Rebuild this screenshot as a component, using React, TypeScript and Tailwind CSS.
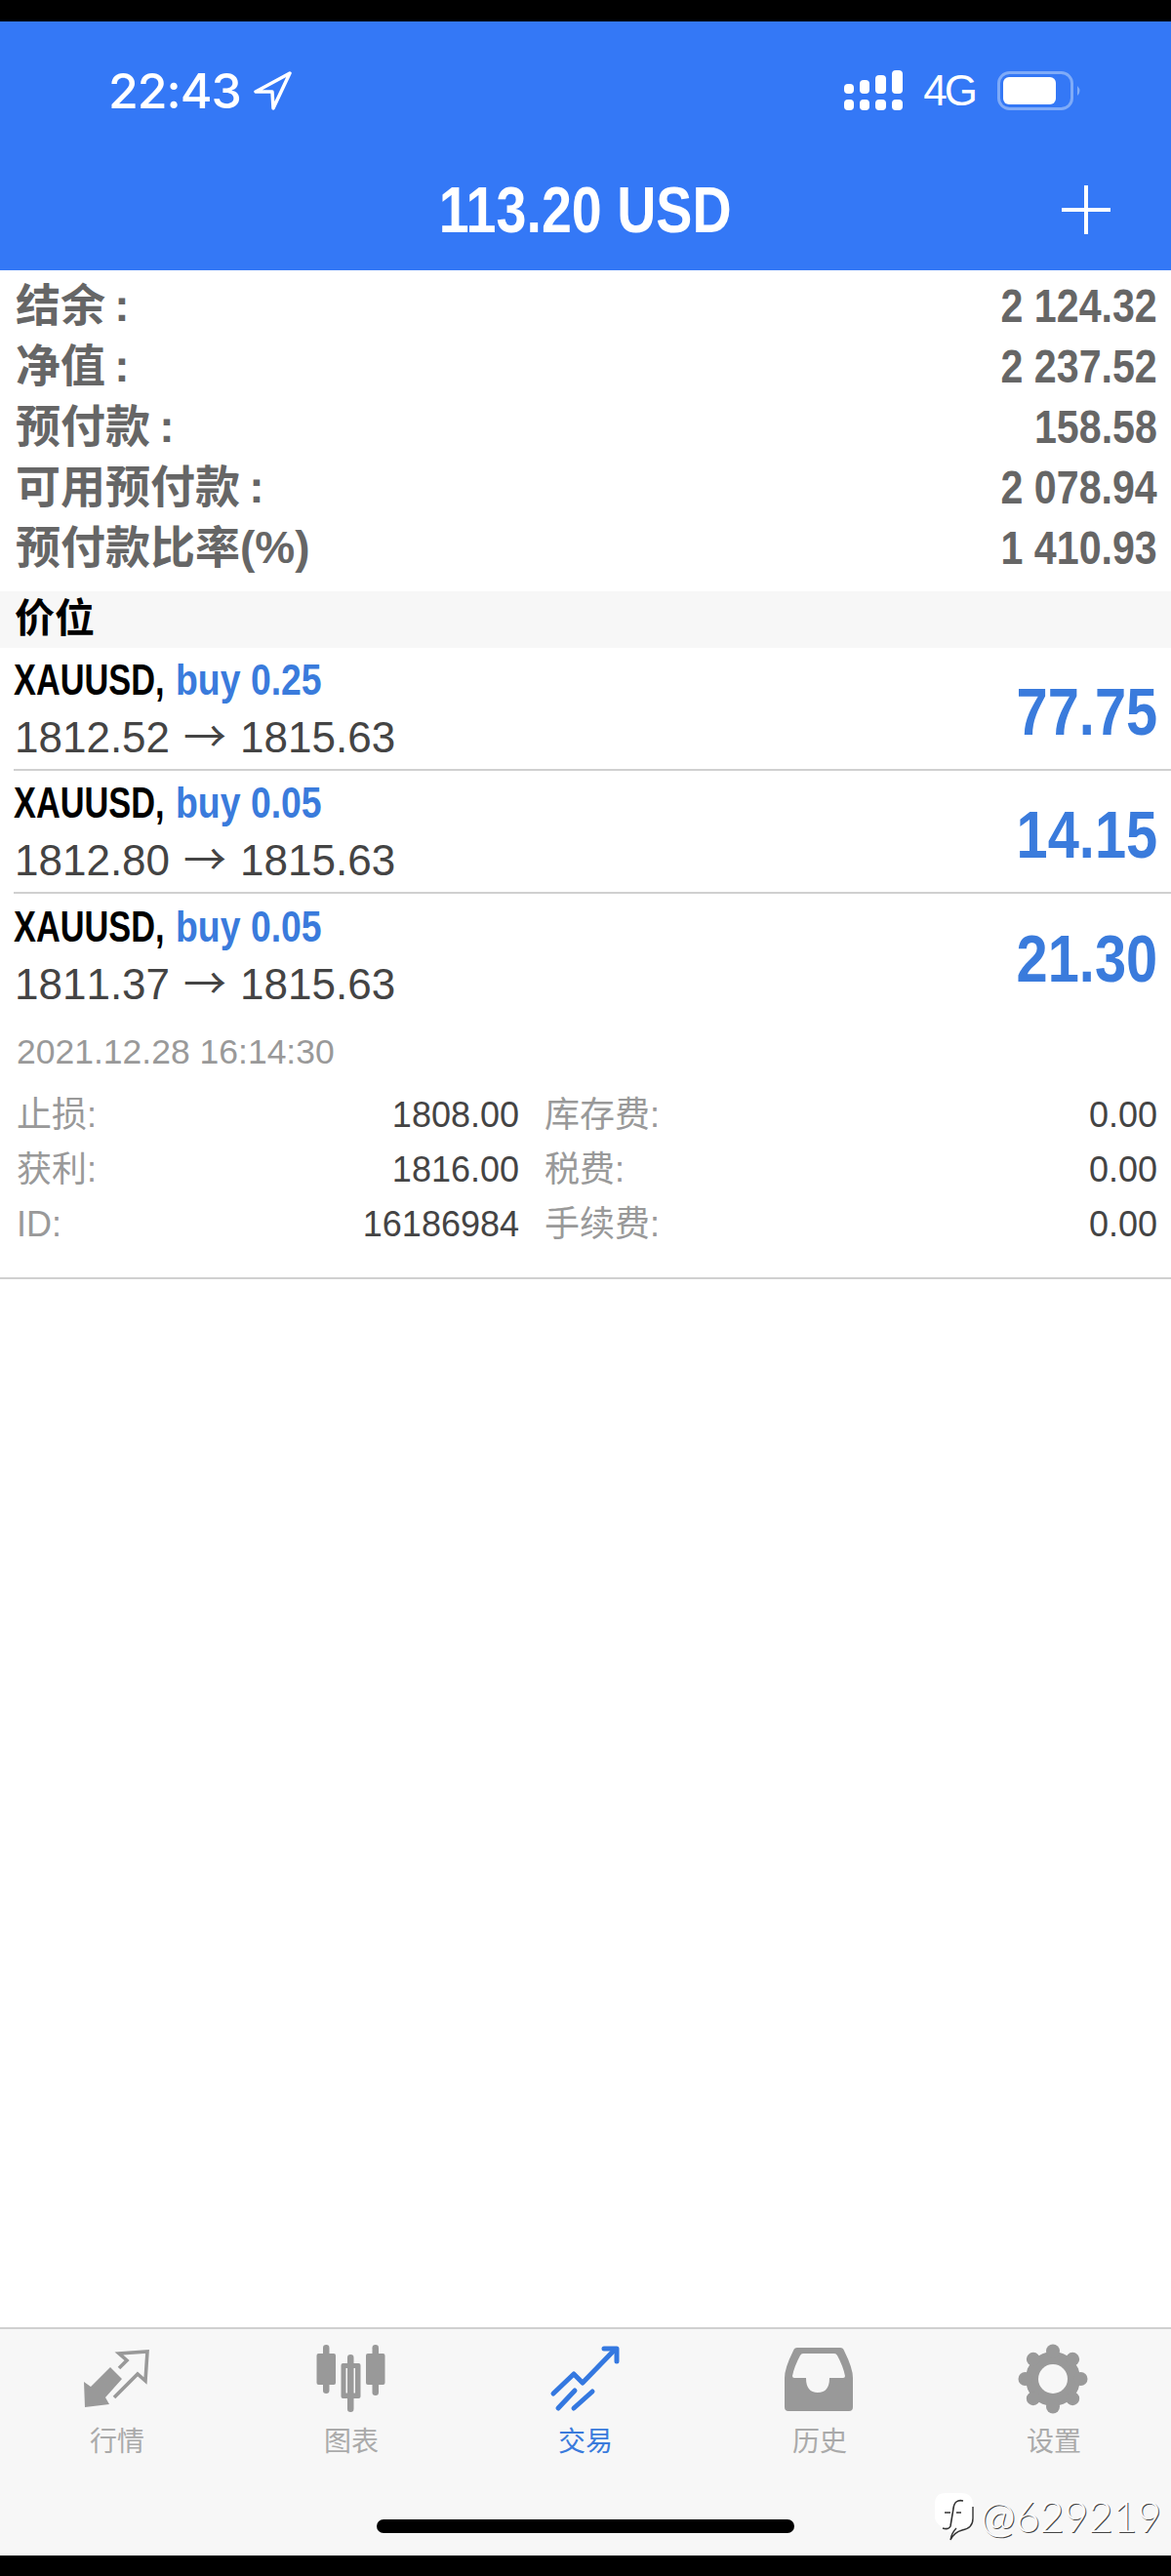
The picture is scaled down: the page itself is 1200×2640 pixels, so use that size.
const summary = [
  ['结余\u2009:', '2 124.32'],
  ['净值\u2009:', '2 237.52'],
  ['预付款\u2009:', '158.58'],
  ['可用预付款\u2009:', '2 078.94'],
  ['预付款比率(%)', '1 410.93'],
];

const positions = [
  { lots: 'buy 0.25', open: '1812.52', profit: '77.75' },
  { lots: 'buy 0.05', open: '1812.80', profit: '14.15' },
  { lots: 'buy 0.05', open: '1811.37', profit: '21.30' },
];

const details = [
  ['止损:', '1808.00', '库存费:', '0.00'],
  ['获利:', '1816.00', '税费:', '0.00'],
  ['ID:', '16186984', '手续费:', '0.00'],
];

const StatusIcons = () => (
  <div className="flex items-center">
    <svg width="60" height="41" viewBox="0 0 60 41" fill="white">
      <rect x="0" y="14" width="10" height="10" rx="4" />
      <rect x="16" y="10" width="10" height="14" rx="4" />
      <rect x="32" y="5" width="11" height="19" rx="4" />
      <rect x="49" y="0" width="11" height="24" rx="4" />
      <rect x="0" y="30" width="10" height="11" rx="4" />
      <rect x="16" y="30" width="10" height="11" rx="4" />
      <rect x="32" y="30" width="11" height="11" rx="4" />
      <rect x="49" y="30" width="11" height="11" rx="4" />
    </svg>
    <span className="ml-[21px] text-[44px] leading-[44px] tracking-[-3px]">4G</span>
    <svg className="ml-[23px]" width="87" height="40" viewBox="0 0 87 40">
      <rect x="1.5" y="1.5" width="75" height="37" rx="11" fill="none" stroke="#7fabf8" strokeWidth="3" />
      <rect x="6" y="6" width="54" height="28" rx="6" fill="white" />
      <path d="M82 15 Q87 20 82 25 Z" fill="#7fabf8" />
    </svg>
  </div>
);

const MarketIcon = () => (
  <svg width="100" height="85" viewBox="0 0 100 85">
    <path d="M43 31 L55 43 L38 62 L42 69 L17 72 L16 46 L23 51 Z" fill="#999" />
    <path d="M52 32 L60 24 L52 17 L81 15 L79 45 L71 38 L47 62" fill="none" stroke="#999" strokeWidth="3.6" />
  </svg>
);

const ChartIcon = () => (
  <svg width="100" height="85" viewBox="0 0 100 85" fill="#999">
    <rect x="21" y="8" width="6.5" height="50" rx="3.2" />
    <rect x="14.5" y="17" width="19.5" height="32" rx="2" />
    <rect x="46" y="18" width="6.5" height="59" rx="3.2" />
    <path fillRule="evenodd" d="M41.5 27 H57.5 Q59.5 27 59.5 29 V61 Q59.5 63 57.5 63 H41.5 Q39.5 63 39.5 61 V29 Q39.5 27 41.5 27 Z M44.5 32 V57.5 H54 V32 Z" />
    <rect x="71.5" y="8" width="6.5" height="52" rx="3.2" />
    <rect x="65" y="17" width="19.5" height="32" rx="2" />
  </svg>
);

const TradeIcon = () => (
  <svg width="100" height="85" viewBox="0 0 100 85" fill="none" stroke="#3478e0" strokeWidth="5" strokeLinecap="round" strokeLinejoin="round">
    <path d="M17 58 L38 38 L47 47 L80 13" />
    <path d="M69 12 H82 V25" />
    <path d="M22 73 L39 55" />
    <path d="M38 73 L57 56" />
  </svg>
);

const HistoryIcon = () => (
  <svg width="100" height="85" viewBox="0 0 100 85" fill="#999">
    <path
      fillRule="evenodd"
      d="M27 11 H71 Q74 11 75 14 Q84 32 84 42 V72 Q84 76 80 76 H18 Q14 76 14 72 V42 Q14 32 23 14 Q24 11 27 11 Z M33 17 H65 Q67 17 68 19 Q74 30 76 40 Q76 42 74 42 H60 Q60 57 48 57 Q36 57 36 42 H24 Q22 42 22 40 Q24 30 30 19 Q31 17 33 17 Z"
    />
  </svg>
);

const SettingsIcon = () => (
  <svg width="100" height="85" viewBox="0 0 100 85" fill="#999">
    <circle cx="49" cy="43" r="28" />
    {[0, 45, 90, 135, 180, 225, 270, 315].map((deg) => (
      <circle key={deg} cx="49" cy="14.5" r="7" transform={`rotate(${deg} 49 43)`} />
    ))}
    <circle cx="49" cy="43" r="15" fill="#f7f7f7" />
  </svg>
);

const tabs = [
  { label: '行情', icon: <MarketIcon /> },
  { label: '图表', icon: <ChartIcon /> },
  { label: '交易', icon: <TradeIcon />, active: true },
  { label: '历史', icon: <HistoryIcon /> },
  { label: '设置', icon: <SettingsIcon /> },
];

export default function App() {
  return (
    <div className='relative flex h-[2640px] w-[1200px] flex-col bg-white font-["Liberation_Sans","Noto_Sans_CJK_SC",sans-serif]'>
      <div className="h-[22px] bg-black" />
      <div className="h-[255px] bg-[#3478f6] text-white">
        <div className="flex h-[141px] items-center justify-between pl-[111px] pr-[91px]">
          <div className="flex items-center gap-[12px]">
            <span className='font-["Inter",sans-serif] text-[50px] leading-[50px] font-medium tracking-[-1px]'>22:43</span>
            <svg width="40" height="40" viewBox="0 0 40 40" fill="none" stroke="white" strokeWidth="3.5" strokeLinejoin="round">
              <path d="M38 2 L3 21 L20 21 L21 38 Z" />
            </svg>
          </div>
          <StatusIcons />
        </div>
        <div className="relative flex h-[104px] items-center justify-center">
          <span className="inline-block origin-center scale-x-[0.83] text-[67px] leading-[76px] font-bold whitespace-nowrap">113.20 USD</span>
          <svg className="absolute right-[62px] top-[27px]" width="50" height="50" viewBox="0 0 50 50" stroke="white" strokeWidth="4">
            <path d="M25 0 V50 M0 25 H50" />
          </svg>
        </div>
      </div>

      <div className="flex h-[329px] flex-col pt-[5px] text-[#666]">
        {summary.map(([label, value]) => (
          <div key={label} className="flex h-[62px] items-center justify-between pl-[16px] pr-[14px]">
            <span className="text-[46px] leading-[62px] font-bold">{label}</span>
            <span className="inline-block origin-right scale-x-[0.84] text-[49px] leading-[62px] font-bold whitespace-nowrap">{value}</span>
          </div>
        ))}
      </div>

      <div className="flex h-[58px] items-center bg-[#f7f7f7] pl-[15px] text-[41px] font-bold text-black">价位</div>

      {positions.map((p, i) => (
        <div key={i} className={`ml-[14px] flex h-[126px] items-center justify-between pr-[14px] ${i < 2 ? 'border-b-2 border-[#d0d0d0]' : ''}`}>
          <div>
            <div className="flex text-[44px] leading-[56px] font-bold">
              <span className="inline-block w-[166px] origin-left scale-x-[0.78] whitespace-nowrap text-black">XAUUSD,</span>
              <span className="inline-block origin-left scale-x-[0.85] whitespace-nowrap text-[#3a7bdc]">{p.lots}</span>
            </div>
            <div className="pl-[1px] text-[44px] leading-[54px] whitespace-nowrap text-[#444] [font-kerning:none]">
              {p.open}
              <span className='mx-[14px] font-["Noto_Sans_CJK_SC",sans-serif]'>→</span>
              1815.63
            </div>
          </div>
          <span className="inline-block origin-right scale-x-[0.85] pt-[6px] text-[68px] font-bold text-[#3a7bdc]">{p.profit}</span>
        </div>
      ))}

      <div className="flex h-[269px] flex-col border-b-2 border-[#d0d0d0] pl-[17px] pr-[14px]">
        <div className="mt-[16px] mb-[17px] text-[35.5px] leading-[40px] text-[#999]">2021.12.28 16:14:30</div>
        {details.map(([a, b, c, d]) => (
          <div key={a} className="grid h-[56px] grid-cols-[515px_1fr] items-center gap-x-[26px] text-[36px]">
            <div className="flex items-center justify-between">
              <span className="text-[#999]">{a}</span>
              <span className="text-[#444]">{b}</span>
            </div>
            <div className="flex items-center justify-between">
              <span className="text-[#999]">{c}</span>
              <span className="text-[#444]">{d}</span>
            </div>
          </div>
        ))}
      </div>

      <div className="flex-1" />

      <div className="relative h-[234px] border-t-2 border-[#d0d0d0] bg-[#f7f7f7]">
        <div className="grid grid-cols-5 pt-[8px]">
          {tabs.map((tab) => (
            <div key={tab.label} className="flex flex-col items-center">
              {tab.icon}
              <span className={`mt-[3px] text-[28px] leading-[40px] ${tab.active ? 'text-[#3a7bdc]' : 'text-[#aaa]'}`}>{tab.label}</span>
            </div>
          ))}
        </div>
        <div className="absolute bottom-[23px] left-[386px] h-[14px] w-[428px] rounded-full bg-black" />
      </div>
      <div className="h-[21px] bg-black" />

      <div className="absolute left-[956px] top-[2553px] flex items-center">
        <svg width="44" height="52" viewBox="0 0 44 52" fill="none">
          <path d="M13 2 H29 Q41 2 41 14 V28 Q41 38 30 40 L20 42 Q14 42 8 36 Q2 32 2 26 V13 Q2 2 13 2 Z" fill="white" />
          <path d="M41 16 V28 Q41 38 30 40 Q22 42 18 50 Q19 43 24 38" stroke="#333" strokeWidth="1.4" />
          <path d="M31 10 Q22 8 21 18 L18 36 Q16 40 10 38 M12 22 H18 M24 22 H29" stroke="#333" strokeWidth="1.6" />
        </svg>
        <span className='ml-[5px] font-["Lato",sans-serif] text-[43px] leading-[52px] font-light text-white [text-shadow:1px_1px_0_#444]'>@629219</span>
      </div>
    </div>
  );
}
